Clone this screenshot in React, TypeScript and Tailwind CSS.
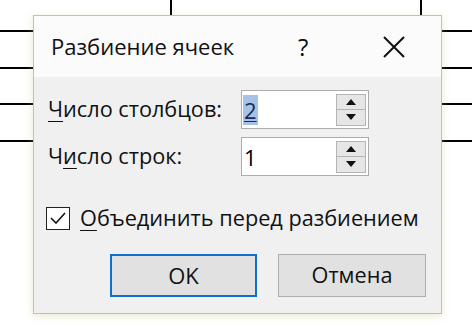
import React from 'react';

const font = { fontFamily: '"Open Sans", "Noto Sans", sans-serif' };

function Spinner({ value, selected }: { value: string; selected?: boolean }) {
  return (
    <div className="flex h-[39px] w-[128px] items-center border border-[#acacac] bg-white pl-[1px] pr-[2px]">
      <div className="flex-1 text-[22px] leading-none text-black">
        {selected ? (
          <span className="bg-[#a7c2e8] px-[1px] text-[#1b2a55] underline decoration-1 underline-offset-2">
            {value}
          </span>
        ) : (
          <span className="px-[1px]">{value}</span>
        )}
      </div>
      <div className="flex h-[32px] w-[30px] flex-col">
        <div className="flex flex-1 items-center justify-center border border-[#b4b4b4] bg-[#e6e6e6]">
          <svg width="10" height="6" viewBox="0 0 10 6">
            <path d="M0 6 L5 0 L10 6 Z" fill="#111" />
          </svg>
        </div>
        <div className="flex flex-1 items-center justify-center border border-t-0 border-[#b4b4b4] bg-[#e6e6e6]">
          <svg width="10" height="6" viewBox="0 0 10 6">
            <path d="M0 0 L5 6 L10 0 Z" fill="#111" />
          </svg>
        </div>
      </div>
    </div>
  );
}

export default function App() {
  return (
    <div className="relative h-[332px] w-[472px] overflow-hidden bg-white" style={font}>
      {/* table behind the dialog */}
      <div className="absolute left-[170px] top-0 h-[40px] w-[2px] bg-black" />
      <div className="absolute left-[420px] top-0 h-[40px] w-[2px] bg-black" />
      {[30, 67, 103, 140].map((y) => (
        <div key={y} className="absolute left-0 h-[2px] w-[472px] bg-black" style={{ top: y }} />
      ))}

      {/* dialog */}
      <div className="absolute left-[33px] top-[15px] flex h-[299px] w-[409px] flex-col border border-[#cdc190] shadow-[0_2px_8px_rgba(200,190,120,0.35)]">
        <div className="flex h-[61px] items-center bg-[#fbfbfb] pl-[17px]">
          <span className="w-[247px] text-[22px] text-[#111]">Разбиение ячеек</span>
          <span className="text-[24px] text-[#111]">?</span>
          <svg className="ml-[75px]" width="22" height="22" viewBox="0 0 22 22">
            <path d="M1 1 L21 21 M21 1 L1 21" stroke="#111" strokeWidth="2" />
          </svg>
        </div>
        <div className="flex flex-1 flex-col bg-[#f0f0f0] pl-[14px] pt-[13px] text-[21.7px] text-[#111]">
          <div className="flex items-center">
            <span className="w-[193px]">
              <span className="underline decoration-1 underline-offset-4">Ч</span>исло столбцов:
            </span>
            <Spinner value="2" selected />
          </div>
          <div className="mt-[8px] flex items-center">
            <span className="w-[193px]">
              Ч<span className="underline decoration-1 underline-offset-4">и</span>сло строк:
            </span>
            <Spinner value="1" />
          </div>
          <div className="mt-[31px] flex h-[22px] items-center">
            <div className="-ml-[2px] flex h-[23px] w-[24px] items-center justify-center border-[1.5px] border-[#222] bg-white">
              <svg width="16" height="12" viewBox="0 0 16 12">
                <path d="M1 6 L6 11 L15 1" stroke="#111" strokeWidth="1.6" fill="none" />
              </svg>
            </div>
            <span className="ml-[10px]">
              <span className="underline decoration-1 underline-offset-4">О</span>бъединить перед разбиением
            </span>
          </div>
          <div className="mt-[25px] flex gap-[21px] pl-[62px]">
            <div className="flex h-[43px] w-[147px] items-center justify-center border-2 border-[#0a6fcd] bg-[#e1e1e1] text-[22px]">
              OK
            </div>
            <div className="flex h-[43px] w-[148px] items-center justify-center border border-[#adadad] bg-[#e1e1e1]">
              Отмена
            </div>
          </div>
        </div>
      </div>
    </div>
  );
}
